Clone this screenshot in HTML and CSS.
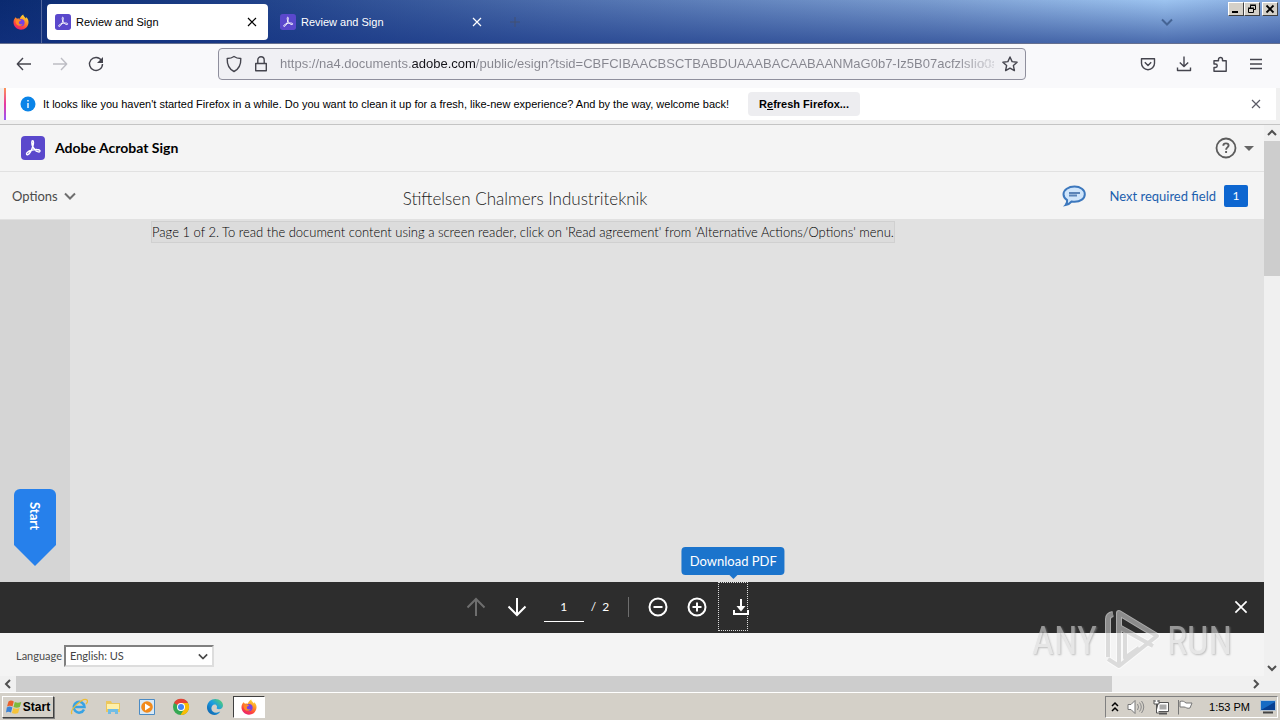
FILE: index.html
```html
<!DOCTYPE html>
<html lang="en">
<head>
    <meta charset="UTF-8">
    <meta name="viewport" content="width=device-width, initial-scale=1.0">
    <title>Review and Sign</title>
    <link rel="stylesheet" href="styles.css">
</head>
<body>
    <!-- shared icons -->
    <svg class="defs" aria-hidden="true">
        <defs>
            <linearGradient id="fox-body" x1="0.8" y1="0" x2="0.3" y2="1">
                <stop offset="0" stop-color="#ffe63a"/>
                <stop offset="0.4" stop-color="#ff9526"/>
                <stop offset="0.75" stop-color="#ff4040"/>
                <stop offset="1" stop-color="#e3207a"/>
            </linearGradient>
            <linearGradient id="edge-body" x1="0" y1="1" x2="1" y2="0">
                <stop offset="0" stop-color="#0c59a4"/>
                <stop offset="0.55" stop-color="#1b9de2"/>
                <stop offset="1" stop-color="#5fd95c"/>
            </linearGradient>
        </defs>
        <symbol id="acrobat" viewBox="0 0 24 24">
            <rect width="24" height="24" rx="4" fill="#5a48cc"/>
            <path d="M11.6 4.8c1.3 0 1 2.8.3 5.2-1 3.3-3 7.6-5 8.6-1.300.5-2-.8-.7-2 2-1.900 6.500-3.200 9.900-3.100 2 0 3.400.8 2.800 1.900-.8 1.300-3.400 0-4.900-1.500-1.700-1.700-3.200-4.900-3.200-7.400 0-1 .2-1.700.8-1.700z" fill="none" stroke="#fff" stroke-width="1.400" stroke-linejoin="round"/>
        </symbol>
        <symbol id="firefox" viewBox="0 0 16 16">
            <path d="M2.600 3.200 4 4.800c1.200-.6 2-.5 2.800-.1C7.300 3 8.600 1.200 10.300.4c.1 1.700 1.500 2.500 2.700 4 .2-.5.200-1 .1-1.500C15 4.700 15.700 6.600 15.500 8.800 15.200 12.800 12 15.700 8 15.700S.6 12.600.5 8.600C.4 6.500 1.200 4.600 2.600 3.200z" fill="url(#fox-body)"/>
            <circle cx="8" cy="8.600" r="3.600" fill="#7542e5"/>
            <path d="M2.900 6.300c1.600-1.400 4-1.100 5.400.4-1.400.1-2.600.8-2.500 2 .1 1.600 2.200 2.200 3.900 1.200-1.200 2.500-5 2.600-6.400.1-.7-1.200-.8-2.600-.4-3.700z" fill="#ff8a26"/>
        </symbol>
        <symbol id="cross" viewBox="0 0 10 10">
            <path d="M1 1l8 8M9 1 1 9" fill="none" stroke="currentColor" stroke-width="1.200"/>
        </symbol>
        <symbol id="chevron" viewBox="0 0 12 8">
            <path d="M1 1.500l5 5 5-5" fill="none" stroke="currentColor" stroke-width="2"/>
        </symbol>
    </svg>

    <header class="tabbar">
        <button class="firefox-view" aria-label="Firefox View"><svg width="16" height="16"><use href="#firefox"/></svg></button>
        <div class="tab active">
            <svg width="16" height="16"><use href="#acrobat"/></svg>
            <span class="tab-title">Review and Sign</span>
            <button class="tab-close" aria-label="Close tab"><svg width="10" height="10"><use href="#cross"/></svg></button>
        </div>
        <div class="tab">
            <svg width="16" height="16"><use href="#acrobat"/></svg>
            <span class="tab-title">Review and Sign</span>
            <button class="tab-close" aria-label="Close tab"><svg width="10" height="10"><use href="#cross"/></svg></button>
        </div>
        <button class="new-tab" aria-label="New tab"><svg width="10" height="10" viewBox="0 0 10 10"><path d="M5 0v10M0 5h10" stroke="currentColor" stroke-width="1"/></svg></button>
        <button class="all-tabs" aria-label="List all tabs"><svg width="12" height="8"><use href="#chevron"/></svg></button>
        <div class="window-buttons">
            <button aria-label="Minimize"><svg width="10" height="10" viewBox="0 0 10 10"><path d="M1 8h6" stroke="#000" stroke-width="2"/></svg></button>
            <button aria-label="Restore"><svg width="10" height="10" viewBox="0 0 10 10"><path d="M3.500 4V1.500h5v4H7M3 1h6M1.500 4.500h5v4h-5zM1 4h6" fill="none" stroke="#000"/></svg></button>
            <button class="win-close" aria-label="Close"><svg width="10" height="10" viewBox="0 0 10 10"><path d="M1.500 1.500l7 7M8.500 1.500l-7 7" stroke="#000" stroke-width="1.800"/></svg></button>
        </div>
    </header>

    <nav class="navbar">
        <div class="nav-buttons">
            <button aria-label="Back"><svg width="16" height="16" viewBox="0 0 16 16"><path d="M15 8H1.500M7 2 1.300 8 7 14" class="line"/></svg></button>
            <button aria-label="Forward" disabled><svg width="16" height="16" viewBox="0 0 16 16"><path d="M1 8h13.500M9 2l5.700 6L9 14" class="line"/></svg></button>
            <button aria-label="Reload"><svg width="16" height="16" viewBox="0 0 16 16"><path d="M13.500 4.500A6.500 6.500 0 1 0 14.500 8" class="line"/><path d="M15 1v6H9z" fill="currentColor"/></svg></button>
        </div>
        <div class="urlbar">
            <svg width="16" height="18" viewBox="0 0 16 18"><path d="M8 1.500c2 1.500 4.300 2 6.800 2C15 9 13.500 13.800 8 16.500 2.500 13.800 1 9 1.200 3.500c2.500 0 4.800-.5 6.800-2z" class="line"/></svg>
            <svg width="14" height="16" viewBox="0 0 14 16"><path d="M1.700 7.500h10.600v7.200H1.700zM3.800 7.500V4a3.200 3.200 0 0 1 6.400 0v3.500" class="line"/></svg>
            <input class="url" type="text" aria-label="Address" value="https://na4.documents.adobe.com/public/esign?tsid=CBFCIBAACBSCTBABDUAAABACAABAANMaG0b7-Iz5B07acfzlsIio0azE6XY">
            <button aria-label="Bookmark this page"><svg width="16" height="16" viewBox="0 0 16 16"><path d="M8 1l2.100 4.600 5 .6-3.700 3.400 1 5L8 12.100l-4.400 2.500 1-5L.9 6.200l5-.6z" class="line"/></svg></button>
        </div>
        <div class="nav-tools">
            <button aria-label="Save to Pocket"><svg width="16" height="16" viewBox="0 0 16 16"><path d="M1.500 2.700h13v4.500a6.500 6.500 0 0 1-13 0zM4.800 6.300 8 9.500l3.200-3.200" class="line"/></svg></button>
            <button aria-label="Downloads"><svg width="16" height="16" viewBox="0 0 16 16"><path d="M8 .5v10M3.800 6.500 8 10.600l4.200-4.100M1.500 11.500v3h13v-3" class="line"/></svg></button>
            <button aria-label="Extensions"><svg width="16" height="16" viewBox="0 0 16 16"><path d="M2 15.200V11.500h1.500a1.700 1.700 0 0 0 0-3.500H2V4.800h4.500V3.500a2 2 0 0 1 4 0v1.300h3.700v10.400z" class="line"/></svg></button>
            <button aria-label="Menu"><svg width="16" height="14" viewBox="0 0 16 14"><path d="M2 2.500h12M2 7h12M2 11.500h12" class="line"/></svg></button>
        </div>
    </nav>

    <div class="notice">
        <div class="notice-box">
            <svg width="16" height="16" viewBox="0 0 16 16"><circle cx="8" cy="8" r="7.500" fill="#0a84e8"/><path d="M8 7v5M8 4v1.500" stroke="#fff" stroke-width="1.400"/></svg>
            <span class="notice-text">It looks like you haven't started Firefox in a while. Do you want to clean it up for a fresh, like-new experience? And by the way, welcome back!</span>
            <button class="refresh">R<u>e</u>fresh Firefox...</button>
            <button class="notice-close" aria-label="Dismiss"><svg width="10" height="10"><use href="#cross"/></svg></button>
        </div>
    </div>

    <div class="viewport">
        <main class="page">
            <div class="brand">
                <svg width="24" height="24"><use href="#acrobat"/></svg>
                <h1>Adobe Acrobat Sign</h1>
                <button class="help" aria-label="Help">
                    <svg width="22" height="22" viewBox="0 0 22 22"><circle cx="11" cy="11" r="9.500" fill="none" stroke="#5c5c5c" stroke-width="1.800"/><path d="M8.300 8.700c.1-3.200 5.300-3 5.300-.2 0 1.900-2.500 1.900-2.500 4.200M11.100 14v2" fill="none" stroke="#5c5c5c" stroke-width="1.900"/></svg>
                    <svg width="10" height="5" viewBox="0 0 10 5"><path d="M0 0h10L5 5z" fill="#666"/></svg>
                </button>
            </div>
            <div class="actions">
                <button class="options">Options <svg width="12" height="8"><use href="#chevron"/></svg></button>
                <h2>Stiftelsen Chalmers Industriteknik</h2>
                <div class="next">
                    <button class="comments" aria-label="Comments"><svg width="24" height="22" viewBox="0 0 24 22"><path d="M12.500 1.500c6 0 10.300 3.400 10.300 7.800 0 4.300-4.300 7.500-10.300 7.500-1 0-2-.1-2.900-.3-1.500 1.700-3.700 3.200-6 3.600 1.300-1.500 1.800-3.200 1.500-5C3 13.700 1.500 11.600 1.500 9.300c0-4.400 5-7.800 11-7.800z" fill="#cfe5fb" stroke="#3d78bd" stroke-width="2"/><path d="M7 8h11M7 10.500h8" stroke="#5b84b8" stroke-width="2"/></svg></button>
                    <a class="next-link" href="#field">Next required field</a>
                    <span class="count">1</span>
                </div>
            </div>
            <div class="document">
                <div class="gutter"><button class="start-tag"><span>Start</span></button></div>
                <div class="sheet"><p>Page 1 of 2. To read the document content using a screen reader, click on 'Read agreement' from 'Alternative Actions/Options' menu.</p></div>
            </div>
            <div class="pagebar">
                <div class="page-tools">
                    <button aria-label="Previous page" disabled><svg width="20" height="20" viewBox="0 0 20 20"><path d="M10 19V2M1.500 10.500 10 2l8.500 8.500" class="thick"/></svg></button>
                    <button aria-label="Next page"><svg width="20" height="20" viewBox="0 0 20 20"><path d="M10 1v17M1.500 9.500 10 18l8.500-8.500" class="thick"/></svg></button>
                    <input class="page-number" type="text" aria-label="Page number" value="1">
                    <span class="page-total">/&nbsp; 2</span>
                    <span class="divider"></span>
                    <button aria-label="Zoom out"><svg width="20" height="20" viewBox="0 0 20 20"><circle cx="10" cy="10" r="8.500" class="ring"/><path d="M5.500 10h9" class="thick"/></svg></button>
                    <button aria-label="Zoom in"><svg width="20" height="20" viewBox="0 0 20 20"><circle cx="10" cy="10" r="8.500" class="ring"/><path d="M5.500 10h9M10 5.500v9" class="thick"/></svg></button>
                    <button class="download" aria-label="Download PDF">
                        <svg width="16" height="18" viewBox="0 0 16 18"><path d="M8 1v9" class="thick"/><path d="M3.500 8h9L8 13.500z" fill="currentColor"/><path d="M1 12v4h14v-4" class="thick"/></svg>
                        <span class="tooltip">Download PDF</span>
                    </button>
                </div>
                <button class="pagebar-close" aria-label="Close toolbar"><svg width="14" height="14"><use href="#cross"/></svg></button>
            </div>
            <footer class="language">
                <label for="language">Language</label>
                <div class="select">
                    <select id="language"><option>English: US</option></select>
                    <svg width="10" height="7" viewBox="0 0 12 8"><use href="#chevron"/></svg>
                </div>
            </footer>
        </main>
        <div class="scroll vertical">
            <svg width="16" height="16" viewBox="0 0 16 16"><path d="M4 10l4-4 4 4" class="arrow"/></svg>
            <div class="track"><div class="thumb"></div></div>
            <svg width="16" height="16" viewBox="0 0 16 16"><path d="M4 6l4 4 4-4" class="arrow"/></svg>
        </div>
        <div class="scroll horizontal">
            <svg width="16" height="16" viewBox="0 0 16 16"><path d="M10 4 6 8l4 4" class="arrow"/></svg>
            <div class="track"><div class="thumb"></div></div>
            <svg width="16" height="16" viewBox="0 0 16 16"><path d="M6 4l4 4-4 4" class="arrow"/></svg>
        </div>
        <div class="corner"></div>
        <div class="watermark">
            <span>ANY</span>
            <svg width="58" height="64" viewBox="0 0 58 64"><path d="M5 48V10q0-4 5-5M16 56V4L54 27 16 57 5 50M16 18l34 19M22 24v25l14-10" fill="none" stroke="#fff" stroke-width="6" stroke-linejoin="round"/><path d="M5 48V10q0-4 5-5M16 56V4L54 27 16 57 5 50M16 18l34 19M22 24v25l14-10" fill="none" stroke="#ccc" stroke-width="4" stroke-linejoin="round"/></svg>
            <span>RUN</span>
        </div>
    </div>

    <div class="taskbar">
        <button class="start-menu">
            <svg width="16" height="16" viewBox="0 0 16 16"><path d="M2.500 2.500C4.500 1 6 1.500 7.800 2.500L6.500 7.500C5 6.500 3.200 6.200 1 7.500z" fill="#e8602c"/><path d="M8.800 3c2 1 4 1 6.500 0l-1.500 5c-2 1-4 1-6.300 0z" fill="#7dba3c"/><path d="M.8 8.500C3 7 4.500 7.500 6.300 8.500L5 13.500c-1.800-1-3.500-1.200-5 0z" fill="#3b83d6"/><path d="M7.300 9c2 1 4 1 6.300 0l-1.500 5c-2 1-4 1-6.200 0z" fill="#f5c33a"/></svg>
            Start
        </button>
        <div class="quick-launch">
            <button aria-label="Internet Explorer"><svg width="18" height="18" viewBox="0 0 18 18"><path d="M14 11.500A5.400 5.400 0 1 1 14.500 9H5" fill="none" stroke="#38a3e4" stroke-width="2.500"/><path d="M2 16C-1 12 13-1 17 2c1 1 0 3-1 4" fill="none" stroke="#edbd35" stroke-width="1.300"/></svg></button>
            <button aria-label="Explorer"><svg width="18" height="18" viewBox="0 0 18 18"><path d="M2 3h5l1 2h8v9H2z" fill="#ecc75d"/><path d="M3 6h12v5H3z" fill="#fff0a8"/><path d="M4 16v-5h10v5h-3v-2H7v2z" fill="#71bde5"/></svg></button>
            <button aria-label="Media Player"><svg width="18" height="18" viewBox="0 0 18 18"><path d="M1.500 1.500h15v15h-15z" fill="#d9e9f6" stroke="#4b8bc4"/><circle cx="9" cy="9" r="5.800" fill="#f28a1b"/><path d="M7 5.500v7L12.500 9z" fill="#fff"/></svg></button>
            <button aria-label="Chrome"><svg width="18" height="18" viewBox="0 0 18 18"><circle cx="9" cy="9" r="8" fill="#35a853"/><path d="M9 9 2 5A8 8 0 0 1 16 5z" fill="#e64235"/><path d="M9 5h7a8 8 0 0 1-7.500 12L12.500 10.500z" fill="#fbbc05"/><circle cx="9" cy="9" r="4" fill="#fff"/><circle cx="9" cy="9" r="3" fill="#4285f4"/></svg></button>
            <button aria-label="Edge"><svg width="18" height="18" viewBox="0 0 18 18"><path d="M1 8.500C1.500 4 5 1 9.300 1 14 1 17 4.200 17 7.500c0 2.300-1.800 3.800-4 3.800-1.700 0-2.500-.5-2.300-1.200 1-1.700-.4-3.600-2-3.600-2 0-3.300 1.700-3.300 4 0 3.700 4.500 5.500 8.900 3.100-1.300 2.200-3.300 3.400-5.800 3.400C4 17 .6 13.300 1 8.500z" fill="url(#edge-body)"/></svg></button>
            <button class="running" aria-label="Firefox"><svg width="16" height="16"><use href="#firefox"/></svg></button>
        </div>
        <div class="tray">
            <svg width="8" height="12" viewBox="0 0 8 12"><path d="M1 5l3-3 3 3M1 10l3-3 3 3" fill="none" stroke="#000" stroke-width="1.500"/></svg>
            <svg width="18" height="16" viewBox="0 0 18 16"><path d="M1 5.500h3l4-4v13l-4-4H1z" fill="#fff" stroke="#777"/><path d="M10.500 5q2 3 0 6M12.500 3.500q3.500 4.500 0 9M14.500 2q4.500 6 0 12" fill="none" stroke="#888"/></svg>
            <svg width="16" height="16" viewBox="0 0 16 16"><path d="M4.500 3.500h11v9h-11z" fill="#fff" stroke="#555"/><path d="M6.500 5.500h7v5h-7z" fill="#aaa"/><path d="M6 14.500h8" stroke="#555" stroke-width="2"/><path d="M1 1v4h5V1M3.500 5v9H6M2 1v2M5 1v2" fill="#fff" stroke="#555"/></svg>
            <svg width="16" height="16" viewBox="0 0 16 16"><path d="M1.500 1v14.500M3 2.500c3-1 4 0 6 1.500h6l-2 5c-3 1-4-1-6-1H3z" fill="#fff" stroke="#777"/></svg>
            <span class="clock">1:53 PM</span>
            <svg width="16" height="14" viewBox="0 0 16 14"><path d="M.5.500h15v10H.5z" fill="#176bc4" stroke="#b5c5d5"/><path d="M1 10 15 2v8z" fill="#073f91"/><path d="M3 12.500h10" stroke="#444" stroke-width="2"/></svg>
        </div>
    </div>
</body>
</html>
```
FILE: styles.css
```css
* {
    box-sizing: border-box;
}
body {
    margin: 0;
    height: 100vh;
    min-height: 480px;
    display: flex;
    flex-direction: column;
    overflow: hidden;
    font-family: "Liberation Sans", sans-serif;
    font-size: 11px;
    line-height: 16px;
    color: #000;
    background-color: #f0f0f0;
}
button {
    display: flex;
    align-items: center;
    justify-content: center;
    padding: 0;
    border: none;
    background: none;
    font: inherit;
    color: inherit;
}
svg {
    display: block;
    flex: none;
}
h1, h2, p {
    margin: 0;
}
.defs {
    position: absolute;
    width: 0;
    height: 0;
}
.line {
    fill: none;
    stroke: currentColor;
    stroke-width: 1.4;
    stroke-linejoin: round;
}

/* tabs */
.tabbar {
    flex: none;
    display: flex;
    align-items: center;
    height: 44px;
    border-bottom: 1px solid #66708f;
    background: linear-gradient(to bottom, rgba(20, 50, 130, 0), rgba(20, 50, 130, 0.6)),
        linear-gradient(to right, #0a2a70, #20428a 20%, #4c6dac 43%, #7b9dd0 73%, #9dc4f0 91%, #86a9dc);
    color: #fff;
}
.firefox-view {
    width: 42px;
    height: 43px;
    border-right: 1px solid #53689f;
    margin-right: 5px;
}
.tab {
    display: flex;
    align-items: center;
    gap: 5px;
    width: 221px;
    height: 36px;
    padding: 0 11px 0 8px;
    margin-right: 4px;
    border-radius: 4px;
}
.tab.active {
    background-color: #fff;
    color: #000;
}
.tab-title {
    flex: 1;
}
.new-tab {
    width: 30px;
    height: 30px;
    margin-left: 3px;
    color: #425073;
}
.all-tabs {
    width: 30px;
    height: 30px;
    margin-left: auto;
    margin-right: 46px;
    color: #456494;
}
.window-buttons {
    display: flex;
    align-self: flex-start;
    padding: 2px 2px 0 0;
}
.window-buttons button {
    width: 16px;
    height: 14px;
    background-color: #d4d0c8;
    border: 1px solid;
    border-color: #fff #404040 #404040 #fff;
}
.window-buttons .win-close {
    margin-left: 2px;
}

/* navigation */
.navbar {
    flex: none;
    display: flex;
    align-items: flex-start;
    height: 44px;
    padding: 4px 16px 0 16px;
    background-color: #f9f9fb;
    color: #45454e;
}
.nav-buttons {
    display: flex;
    align-items: center;
    gap: 20px;
    width: 202px;
    height: 32px;
}
.nav-buttons button:disabled {
    color: #bdbdc4;
}
.urlbar {
    flex: 1;
    display: flex;
    align-items: center;
    gap: 12px;
    height: 32px;
    padding: 0 7px;
    border: 1px solid #8f8f9d;
    border-radius: 4px;
    background-color: #f0f0f4;
}
.url {
    flex: 1;
    min-width: 0;
    margin-right: -4px;
    padding: 0;
    border: none;
    outline: none;
    font-family: "Liberation Sans", sans-serif;
    font-size: 13px;
    line-height: 20px;
    color: transparent;
    /* domain is darker than the rest, end of the address fades out */
    background-image: linear-gradient(to left, #f0f0f4, rgba(240, 240, 244, 0) 40px),
        linear-gradient(to right, #85858e 132px, #15141a 132px, #15141a 195px, #85858e 195px);
    -webkit-background-clip: text;
    background-clip: text;
}
.nav-tools {
    display: flex;
    align-items: center;
    justify-content: flex-end;
    gap: 20px;
    width: 238px;
    height: 32px;
}

/* notification */
.notice {
    flex: none;
    height: 37px;
    padding: 0 4px;
    background-color: #f0f0f0;
    border-bottom: 1px solid #c4c4c4;
}
.notice-box {
    display: flex;
    align-items: center;
    height: 32px;
    padding: 0 15px 0 14px;
    background-color: #fff;
    border-left: 2px solid;
    border-image: linear-gradient(#ff9a50, #e839a0, #9059ff) 1;
}
.notice-text {
    margin-left: 7px;
    white-space: nowrap;
}
.refresh {
    height: 24px;
    margin-left: 19px;
    padding: 0 11px;
    border-radius: 4px;
    background-color: #ededf0;
    font-weight: bold;
    white-space: pre;
}
.notice-close {
    margin-left: auto;
    color: #5b5b66;
}

/* page */
.viewport {
    position: relative;
    flex: 1;
    min-height: 0;
    display: grid;
    grid-template-columns: minmax(0, 1fr) 16px;
    grid-template-rows: minmax(0, 1fr) 16px;
}
.page {
    display: flex;
    flex-direction: column;
    font-family: Lato, sans-serif;
    font-size: 13px;
    color: #4b4b4b;
    background-color: #f4f4f4;
}
.brand {
    flex: none;
    display: flex;
    align-items: center;
    gap: 10px;
    height: 47px;
    padding: 0 10px 0 21px;
    border-bottom: 1px solid #e1e1e1;
}
.brand h1 {
    font-size: 14px;
    line-height: 20px;
    color: #000;
}
.help {
    gap: 7px;
    margin-left: auto;
}
.actions {
    flex: none;
    display: flex;
    align-items: center;
    height: 48px;
    padding: 0 16px 0 12px;
    border-bottom: 1px solid #e1e1e1;
}
.options {
    gap: 6px;
}
.options svg {
    color: #6e6e6e;
}
.actions h2 {
    flex: 1;
    font-size: 17px;
    font-weight: 300;
    line-height: 20px;
    text-align: center;
    padding-top: 6px;
    color: #222;
}
.next {
    display: flex;
    align-items: center;
    padding-left: 88px;
}
.next-link {
    margin: 0 8px 0 23px;
    color: #1c5fae;
    text-decoration: none;
}
.count {
    width: 24px;
    border-radius: 2px;
    background-color: #0d66d0;
    color: #fff;
    font-size: 12px;
    line-height: 22px;
    text-align: center;
}
.document {
    flex: 1;
    min-height: 0;
    display: flex;
    background-color: #e1e1e1;
}
.gutter {
    flex: none;
    display: flex;
    flex-direction: column;
    justify-content: flex-end;
    width: 70px;
    padding: 0 14px 16px;
    background-color: #d5d5d5;
}
.start-tag {
    justify-content: flex-start;
    flex-direction: column;
    height: 77px;
    padding-top: 13px;
    border-radius: 6px;
    background-color: #2680eb;
    clip-path: polygon(0 0, 100% 0, 100% 56px, 50% 100%, 0 56px);
    color: #fff;
    font-weight: bold;
}
.start-tag span {
    writing-mode: vertical-rl;
}
.sheet {
    padding: 1px 81px;
}
.sheet p {
    border: 1px solid #d0d0d0;
    background-color: #dcdcdc;
    color: #000;
    font-weight: 300;
    line-height: 20px;
    white-space: nowrap;
}
.pagebar {
    flex: none;
    display: flex;
    height: 51px;
    padding-bottom: 2px;
    background-color: #2d2d2d;
    color: #fff;
}
.page-tools {
    flex: 1;
    display: flex;
    align-items: center;
    justify-content: center;
}
.page-tools button:disabled {
    color: #6e6e6e;
}
.page-tools button + button {
    margin-left: 19px;
}
.page-tools button:disabled + button {
    margin-left: 21px;
}
.thick, .ring {
    fill: none;
    stroke: currentColor;
    stroke-width: 2;
}
.page-number {
    width: 40px;
    height: 30px;
    margin: 0 7px 0 17px;
    padding: 0;
    border: none;
    border-bottom: 1px solid #fff;
    background: none;
    color: #fff;
    font: inherit;
    font-size: 12px;
    text-align: center;
}
.page-total {
    font-size: 12px;
}
.divider {
    width: 1px;
    height: 20px;
    margin: 0 19px;
    background-color: #6e6e6e;
}
.page-tools button.download {
    position: relative;
    justify-content: flex-start;
    width: 30px;
    height: 49px;
    margin-left: 11px;
    padding-left: 14px;
    border: 1px dotted #ddd;
}
.tooltip {
    position: absolute;
    left: 50%;
    bottom: 100%;
    margin-bottom: 8px;
    transform: translateX(-50%);
    padding: 0 8px;
    border-radius: 4px;
    background-color: #1b74cc;
    line-height: 28px;
    white-space: nowrap;
}
.tooltip::after {
    content: "";
    position: absolute;
    left: 50%;
    top: 100%;
    margin-left: -4px;
    border: 4px solid transparent;
    border-top-color: #1b74cc;
}
.pagebar-close {
    width: 50px;
    padding-left: 4px;
}
.language {
    flex: none;
    display: flex;
    align-items: center;
    gap: 2px;
    height: 43px;
    padding: 3px 16px 0;
    font-size: 11px;
}
.select {
    position: relative;
    width: 150px;
}
.select select {
    width: 100%;
    height: 22px;
    padding: 0 4px;
    appearance: none;
    border: 2px solid;
    border-color: #808080 #ddd #ddd #808080;
    border-radius: 0;
    background-color: #fff;
    color: #444;
    font: inherit;
}
.select svg {
    position: absolute;
    right: 6px;
    top: 8px;
    pointer-events: none;
}

/* scrollbars */
.scroll {
    display: flex;
    background-color: #f0f0f0;
}
.vertical {
    flex-direction: column;
}
.track {
    flex: 1;
}
.thumb {
    background-color: #cdcdcd;
}
.vertical .thumb {
    height: 26%;
}
.horizontal .thumb {
    width: 89%;
    height: 100%;
}
.arrow {
    fill: none;
    stroke: #505050;
    stroke-width: 2;
}
.corner {
    background-color: #f0f0f0;
}
.watermark {
    position: absolute;
    right: 48px;
    bottom: 19px;
    display: flex;
    align-items: center;
    gap: 6px;
    opacity: 0.6;
    font-family: "Roboto Condensed", "Open Sans Condensed", Roboto, sans-serif;
    font-size: 38px;
    line-height: 40px;
    color: #ddd;
    text-shadow: 1px 1px 2px #999;
    pointer-events: none;
}

/* taskbar */
.taskbar {
    flex: none;
    display: flex;
    align-items: center;
    height: 28px;
    padding: 0 2px;
    border-top: 1px solid #fff;
    background-color: #d4d0c8;
}
.start-menu {
    width: 52px;
    height: 22px;
    gap: 1px;
    border: 1px solid;
    border-color: #fff #404040 #404040 #fff;
    box-shadow: 1px 1px 0 #808080;
    font-weight: bold;
    font-size: 12px;
}
.quick-launch {
    display: flex;
    align-items: center;
    gap: 16px;
    margin-left: 16px;
}
.quick-launch .running {
    width: 32px;
    height: 22px;
    margin-left: -7px;
    background-color: #fff;
    border: 1px solid;
    border-color: #404040 #fff #fff #404040;
}
.tray {
    display: flex;
    align-items: center;
    gap: 8px;
    height: 22px;
    margin-left: auto;
    padding: 0 1px 0 5px;
    border: 1px solid;
    border-color: #808080 #fff #fff #808080;
}
.clock {
    margin: 0 2px 0 8px;
}
```
